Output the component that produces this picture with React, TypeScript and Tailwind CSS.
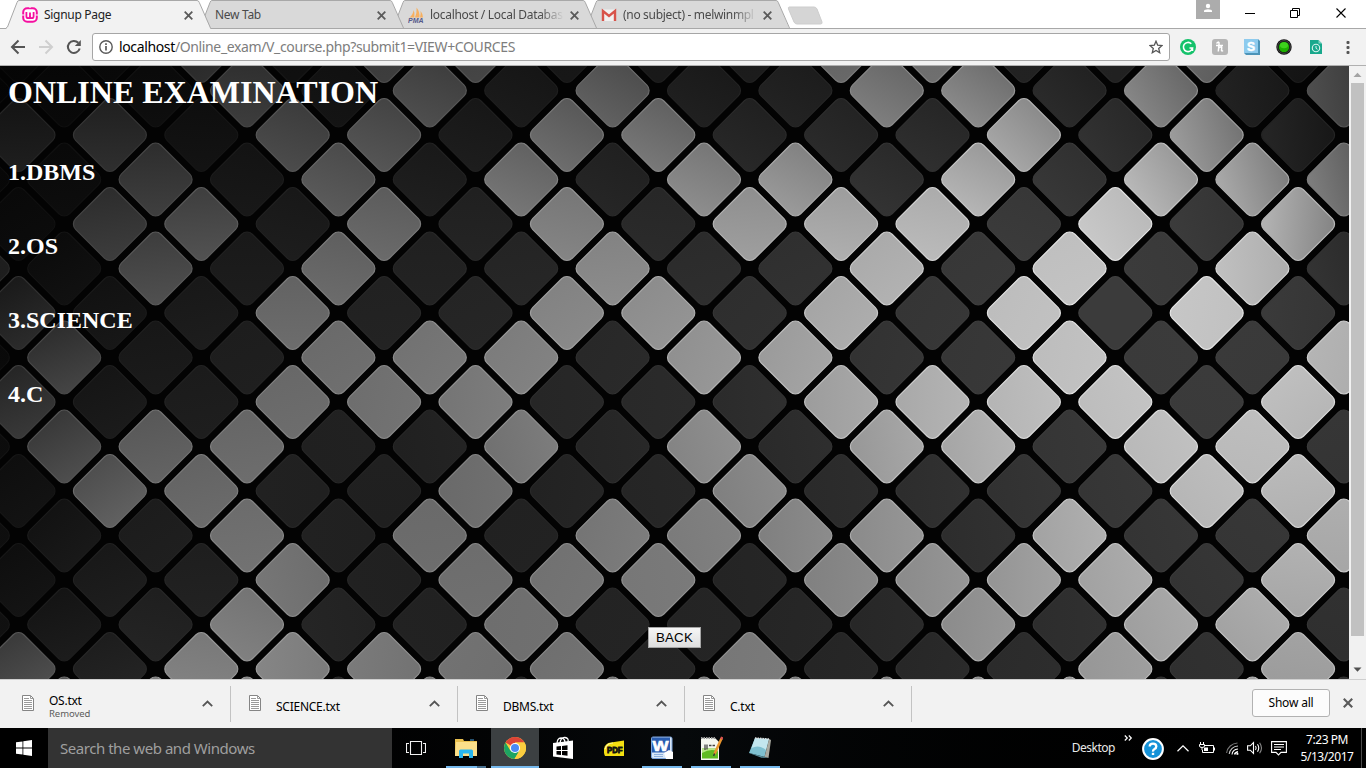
import React from "react";

/* ---------- wallpaper ---------- */

const FIELD_X = [0, 130, 260, 400, 520, 640, 760, 880, 1000, 1100, 1200, 1280, 1349];
const FIELD_Y = [0, 69, 154, 244, 334, 424, 514, 614];
const FIELD = [
  [14, 30, 50, 60, 70, 80, 90, 104, 112, 112, 100, 80, 56],
  [22, 42, 64, 78, 94, 106, 122, 132, 152, 152, 138, 110, 78],
  [30, 56, 84, 100, 120, 134, 152, 172, 188, 194, 186, 166, 124],
  [28, 72, 100, 114, 128, 142, 158, 174, 190, 196, 196, 188, 172],
  [40, 86, 104, 114, 126, 138, 152, 168, 184, 192, 194, 190, 178],
  [48, 94, 110, 104, 112, 126, 134, 150, 168, 180, 186, 184, 174],
  [50, 96, 116, 108, 112, 120, 124, 138, 152, 166, 174, 174, 166],
  [62, 122, 134, 118, 110, 118, 120, 128, 142, 152, 158, 158, 152],
];

/* Columns of the bright tiles, row by row from the top edge. */
const BRIGHT: number[][] = [
  [4, 8, 10, 18, 20, 26],
  [5, 9, 13, 19, 21, 25, 29],
  [0, 2, 6, 8, 12, 14, 22, 26],
  [3, 7, 11, 15, 17, 21, 25, 27, 29],
  [2, 4, 8, 12, 16, 18, 20, 24, 28],
  [-1, 3, 7, 13, 19, 23, 27],
  [0, 6, 12, 14, 18, 22, 26],
  [1, 7, 9, 11, 15, 17, 23, 29],
  [0, 6, 8, 10, 18, 20, 22, 24, 28],
  [1, 3, 5, 11, 15, 19, 21, 25, 27],
  [2, 4, 10, 16, 26, 28],
  [5, 9, 13, 15, 17, 19, 23, 29],
  [6, 10, 12, 14, 18, 20, 22, 24, 28],
  [5, 11, 21, 25, 27],
  [0, 4, 6, 8, 10, 12, 16, 24, 28],
  [1, 3, 5, 9, 13, 15, 17, 19, 21, 23, 27],
];

function locate(axis: number[], v: number): [number, number] {
  const c = Math.min(Math.max(v, axis[0]), axis[axis.length - 1]);
  let i = 0;
  while (i < axis.length - 2 && c > axis[i + 1]) i++;
  return [i, (c - axis[i]) / (axis[i + 1] - axis[i])];
}

function light(x: number, y: number): number {
  const [i, u] = locate(FIELD_X, x);
  const [j, v] = locate(FIELD_Y, y);
  const a = FIELD[j][i] * (1 - u) + FIELD[j][i + 1] * u;
  const b = FIELD[j + 1][i] * (1 - u) + FIELD[j + 1][i + 1] * u;
  return a * (1 - v) + b * v;
}

function gray(v: number): string {
  const g = Math.round(Math.min(255, Math.max(0, v)));
  return `rgb(${g},${g},${g})`;
}

function Wallpaper() {
  const defs: React.ReactNode[] = [];
  const tiles: React.ReactNode[] = [];
  BRIGHT.forEach((cols, row) => {
    const cy = 24.5 + (row - 1) * 44.5;
    for (let col = -1; col < 30; col++) {
      if ((col + row) % 2 !== 0) continue;
      const cx = 18.5 + col * 45.7;
      const lit = cols.includes(col);
      const k = lit ? 1 : 0.3;
      const c = light(cx, cy) * k;
      const gx = (light(cx + 30, cy) - light(cx - 30, cy)) * k;
      const gy = (light(cx, cy + 30) - light(cx, cy - 30)) * k;
      const n = Math.hypot(gx, gy) || 1;
      const id = `t${row}_${col + 1}`;
      const d = n / 2;
      defs.push(
        <linearGradient
          key={id}
          id={id}
          gradientUnits="userSpaceOnUse"
          x1={cx - (gx / n) * 32}
          y1={cy - (gy / n) * 32}
          x2={cx + (gx / n) * 32}
          y2={cy + (gy / n) * 32}
        >
          <stop offset="0" stopColor={gray(c - d)} />
          <stop offset="1" stopColor={gray(c + d)} />
        </linearGradient>
      );
      tiles.push(
        <rect
          key={id}
          x={cx - 28}
          y={cy - 28}
          width="56"
          height="56"
          rx="7.5"
          transform={`rotate(45 ${cx} ${cy})`}
          fill={`url(#${id})`}
          stroke={gray(lit ? c * 1.12 + 10 : c + 6)}
          strokeWidth="1.2"
        />
      );
    }
  });
  return (
    <svg className="absolute inset-0" width="1349" height="613" viewBox="0 0 1349 613">
      <rect width="1349" height="613" fill="#030303" />
      <defs>{defs}</defs>
      {tiles}
    </svg>
  );
}

/* ---------- browser tabs ---------- */

function Cross({ className = "", s = 9, w = 1.8 }: { className?: string; s?: number; w?: number }) {
  return (
    <svg className={className} width={s} height={s} viewBox="0 0 9 9" stroke="#5a5a5a" strokeWidth={w}>
      <path d="M.7 .7L8.3 8.3M8.3 .7L.7 8.3" />
    </svg>
  );
}

function WampIcon() {
  return (
    <svg width="16" height="16" viewBox="0 0 16 16">
      <rect x="1.2" y="1.2" width="13.6" height="13.6" rx="4" fill="#fff" stroke="#f50fa0" strokeWidth="2" />
      <path d="M0 8h2.4M13.6 8H16M8 0v1" stroke="#fff" strokeWidth="1" />
      <path d="M4.4 5v4.2q0 2 1.8 2T8 9.2V5.6M8 9.2q0 2 1.8 2t1.8-2V5" fill="none" stroke="#f50fa0" strokeWidth="1.8" />
    </svg>
  );
}

function PmaIcon() {
  return (
    <svg width="16" height="16" viewBox="0 0 16 16">
      <path d="M1.500 10.500Q5 8 5.600 3Q7 6 6.400 10.500zM7 10.500Q9 6 8.600 .5Q12 5 11.400 10.500zM12 10.500Q13 7 12.600 4Q15 7 15 10.500z" fill="#f7b060" />
      <text
        x="0"
        y="15.800"
        fontSize="6.500"
        fontWeight="700"
        fontStyle="italic"
        fill="#55588a"
        fontFamily="Liberation Sans, sans-serif"
        textLength="15.500"
        lengthAdjust="spacingAndGlyphs"
      >
        PMA
      </text>
    </svg>
  );
}

function GmailIcon() {
  return (
    <svg width="16" height="16" viewBox="0 0 16 16">
      <rect x="1" y="2.500" width="14" height="11.500" rx="1" fill="#f1f1f1" />
      <path d="M2 14V4l6 5 6-5v10" fill="none" stroke="#d8534a" strokeWidth="2.400" />
    </svg>
  );
}

function Tab({
  title,
  icon,
  active = false,
  layer,
}: {
  title: React.ReactNode;
  icon?: React.ReactNode;
  active?: boolean;
  layer: string;
}) {
  return (
    <div className={`relative -mr-3 flex h-7 w-[205px] shrink-0 items-center pl-4 pr-[18px] pt-[2px] ${layer}`}>
      <svg className="absolute left-0 top-0" width="205" height={active ? 29 : 28} viewBox={active ? "0 0 205 29" : "0 0 205 28"}>
        <path
          d="M0 29L1.500 27L11 2.500Q11.600 1 13 1H191Q192.600 1 193.300 2.500L204.500 29z"
          fill={active ? "#f2f2f2" : "#d9d9d9"}
        />
        <path d="M0 28L1.500 27L11 2.500Q11.600 .500 13 .500H191Q192.600 .500 193.300 2.500L204.500 28" fill="none" stroke="#a8a8a8" />
      </svg>
      <div className="relative flex min-w-0 flex-1 items-center gap-[6px]">
        {icon}
        <span className={`flex-1 whitespace-nowrap text-[12px] leading-4 ${active ? "text-[#222]" : "text-[#4a4a4a]"}`}>{title}</span>
      </div>
      <Cross className="relative ml-[6px]" />
    </div>
  );
}

function TabStrip() {
  const fade = "w-[134px] [mask-image:linear-gradient(to_right,black_82%,transparent)]";
  return (
    <div className="flex h-7 shrink-0 bg-white pl-[6px]">
      <Tab layer="z-40" active icon={<WampIcon />} title={<span className="tracking-[-0.3px]">Signup Page</span>} />
      <Tab layer="z-30" title={<span className="tracking-[-0.3px]">New Tab</span>} />
      <Tab
        layer="z-20"
        icon={<PmaIcon />}
        title={<div className={`-mr-2 tracking-[-0.3px] ${fade}`}>localhost / Local Databas</div>}
      />
      <Tab
        layer="z-10"
        icon={<GmailIcon />}
        title={<div className={`-mr-2 tracking-[-0.32px] ${fade}`}>(no subject) - melwinmpl</div>}
      />
      <svg className="ml-[9px] mt-[6px]" width="36" height="19" viewBox="0 0 36 19">
        <path d="M2 1h25q2 0 3 2l5 13q.5 2-1.500 2H10q-2 0-3-2L1.500 3Q1 1 2 1z" fill="#d5d5d5" stroke="#cdcdcd" />
      </svg>
      <div className="ml-auto flex">
        <div className="h-[19px] w-6 bg-[#acacac]">
          <svg width="24" height="19" viewBox="0 0 24 19" fill="#fff">
            <circle cx="12" cy="6" r="2.200" />
            <path d="M8 12V10.800Q8.500 9.300 12 9.300T16 10.800V12z" />
          </svg>
        </div>
        <svg width="146" height="28" viewBox="0 0 146 28" fill="none" stroke="#000" strokeWidth="1">
          <path d="M25 13.500h10M70.500 10.500h7v7h-7zM72.500 10v-1.500h7v7H78" />
          <path d="M116.500 8.500l9 9M125.500 8.500l-9 9" strokeWidth="1.100" />
        </svg>
      </div>
    </div>
  );
}

/* ---------- toolbar ---------- */

function Toolbar() {
  return (
    <div className="flex h-[38px] shrink-0 items-center border-b border-t border-b-[#b0b0b0] border-t-[#a8a8a8] bg-[#f2f2f2]">
      <svg width="92" height="36" viewBox="0 0 92 36" fill="none" strokeWidth="2">
        <path d="M25 18H12.500M18.500 11.500L12 18l6.500 6.500" stroke="#555" />
        <path d="M39 18h12.500M45.500 11.500L52 18l-6.500 6.500" stroke="#cfcfcf" />
        <path d="M78.300 13.800A6 6 0 1 0 79.700 19.500" stroke="#555" />
        <path d="M80.800 11v6h-6z" fill="#555" />
      </svg>
      <div className="flex h-[28px] w-[1078px] items-center rounded-[3px] border border-[#a6a6a6] bg-white">
        <svg className="ml-[6px]" width="14" height="14" viewBox="0 0 14 14">
          <circle cx="7" cy="7" r="6.200" fill="none" stroke="#5a5a5a" strokeWidth="1.400" />
          <path d="M7 6v4.500M7 3.300V5" stroke="#5a5a5a" strokeWidth="1.700" />
        </svg>
        <span className="ml-[6px] whitespace-nowrap text-[14px] leading-5 tracking-[-0.365px] text-[#7d7d7d]">
          <span className="text-black">localhost</span>/Online_exam/V_course.php?submit1=VIEW+COURCES
        </span>
        <svg className="ml-auto mr-[6px]" width="14" height="14" viewBox="0 0 14 14">
          <path
            d="M7 1.200l1.700 4 4.300.400-3.300 2.800 1 4.300L7 10.400l-3.700 2.300 1-4.300L1 5.600l4.300-.400z"
            fill="none"
            stroke="#555"
            strokeWidth="1.300"
          />
        </svg>
      </div>
      <div className="flex items-center gap-4 pl-[10px]">
        <svg width="16" height="16" viewBox="0 0 16 16">
          <circle cx="8" cy="8" r="8" fill="#15c26b" />
          <path d="M11.300 4.800A4.600 4.600 0 1 0 12.500 9H9.500M12.500 9v3" fill="none" stroke="#fff" strokeWidth="1.600" />
        </svg>
        <svg width="16" height="16" viewBox="0 0 16 16">
          <rect width="16" height="16" rx="3" fill="#b5b5b5" />
          <path d="M4.500 4.500Q7.500 1.500 7 5L6.300 12.500M4 6.500h7M6.300 9.500Q10 6.500 9.700 9L9.500 11.500q.5 1 1.500 0" fill="none" stroke="#fff" strokeWidth="1.500" />
        </svg>
        <svg width="16" height="16" viewBox="0 0 16 16">
          <path d="M0 0h14l2 2v14H2l-2-2z" fill="#4d94b8" />
          <rect width="14" height="14" fill="#8ecbee" />
          <text x="3" y="11.500" fontSize="12" fontWeight="700" fill="#fff" stroke="#fff" strokeWidth=".5" fontFamily="Liberation Sans, sans-serif">
            S
          </text>
        </svg>
        <svg width="16" height="16" viewBox="0 0 16 16">
          <circle cx="8" cy="8" r="7.700" fill="#111" />
          <circle cx="8" cy="8" r="6.400" fill="none" stroke="#555" strokeWidth=".8" />
          <circle cx="8" cy="8" r="5.200" fill="#1db000" />
          <ellipse cx="8" cy="6.300" rx="4" ry="3" fill="#3ed21d" />
        </svg>
        <svg width="16" height="16" viewBox="0 0 16 16">
          <path d="M2 1h8.500L14 4.500V15H2z" fill="#18a88c" />
          <path d="M10.500 1v3.500H14z" fill="#7dd3c2" />
          <circle cx="8" cy="9" r="3.700" fill="none" stroke="#d9f3ee" strokeWidth="1.100" />
          <path d="M8 7v2.300l1.500 1" fill="none" stroke="#d9f3ee" />
        </svg>
        <svg className="ml-[6px]" width="4" height="14" viewBox="0 0 4 14" fill="#555">
          <rect x=".5" y="1" width="3" height="3" rx="1" />
          <rect x=".5" y="6" width="3" height="3" rx="1" />
          <rect x=".5" y="11" width="3" height="3" rx="1" />
        </svg>
      </div>
    </div>
  );
}

/* ---------- page ---------- */

const COURSES = ["1.DBMS", "2.OS", "3.SCIENCE", "4.C"];

function Page() {
  return (
    <div className="flex h-[613px] shrink-0">
      <main className="relative flex w-[1349px] flex-col overflow-hidden bg-black">
        <Wallpaper />
        <div className="relative flex flex-1 flex-col px-2 pt-2 font-['Liberation_Serif',serif] font-bold text-white">
          <h1 className="h-[37px] text-[32px] leading-[37px]">ONLINE EXAMINATION</h1>
          <div className="mt-12 flex flex-col gap-[47px]">
            {COURSES.map((name) => (
              <h2 key={name} className="h-[27px] text-[24px] leading-[27px]">
                {name}
              </h2>
            ))}
          </div>
          <button className="mb-[31px] mt-auto h-[21px] w-[53px] self-center border border-[#a5a5a5] bg-gradient-to-b from-[#f6f6f6] to-[#dedede] font-['Liberation_Sans',sans-serif] text-[13.33px] font-normal leading-[18px] tracking-[0.2px] text-black">
            BACK
          </button>
        </div>
      </main>
      <div className="flex w-[17px] flex-col items-center bg-[#f1f1f1]">
        <svg width="17" height="17" viewBox="0 0 17 17">
          <path d="M4.500 11h8L8.500 6.800z" fill="#a3a3a3" />
        </svg>
        <div className="h-[553px] w-[13px] bg-[#c1c1c1]" />
        <svg className="mt-auto" width="17" height="17" viewBox="0 0 17 17">
          <path d="M4.500 5.500h8L8.500 9.700z" fill="#505050" />
        </svg>
      </div>
    </div>
  );
}

/* ---------- download shelf ---------- */

function Download({ name, note }: { name: string; note?: string }) {
  return (
    <div className="flex h-9 w-[227px] items-center border-r border-[#c3c3c3] pl-[18px] pr-[17px]">
      <svg className="mb-[3px]" width="12" height="16" viewBox="0 0 12 16">
        <path d="M.5 .5h8l3 3v12H.500z" fill="#fff" stroke="#858585" />
        <path d="M8.500 .500v3h3M2 3.500h5M2 5.500h8M2 7.500h8M2 9.500h8M2 11.500h8M2 13.500h8" fill="none" stroke="#9a9a9a" />
      </svg>
      <div className="ml-[15px] flex-1">
        <div className="mt-[5px] text-[12px] leading-[14px] tracking-[-0.25px] text-black">{name}</div>
        {note && <div className="text-[9.500px] leading-[11px] tracking-[-0.05px] text-[#5c5c5c]">{note}</div>}
      </div>
      <svg className="mb-[2px]" width="11" height="7" viewBox="0 0 11 7">
        <path d="M.8 6.200L5.500 1.500l4.700 4.700" fill="none" stroke="#555" strokeWidth="1.800" />
      </svg>
    </div>
  );
}

function Shelf() {
  return (
    <div className="flex h-[49px] shrink-0 items-center border-t border-[#cfcfcf] bg-[#f2f2f2] pl-1">
      <Download name="OS.txt" note="Removed" />
      <Download name="SCIENCE.txt" />
      <Download name="DBMS.txt" />
      <Download name="C.txt" />
      <button className="mb-[2px] ml-auto mr-[13px] h-[28px] w-[78px] rounded-[3px] border border-[#b2b2b2] bg-[#fcfcfc] text-[12px] leading-4 tracking-[-0.18px] text-black">
        Show all
      </button>
      <Cross className="mb-[2px] mr-[13px]" s={10} w={1.9} />
    </div>
  );
}

/* ---------- taskbar ---------- */

function Slot({ children, bar = "", className = "" }: { children: React.ReactNode; bar?: string; className?: string }) {
  return (
    <div className={`relative flex h-10 items-center justify-center ${className}`}>
      {children}
      {bar && <div className={`absolute inset-x-0 bottom-0 h-[2px] ${bar}`} />}
    </div>
  );
}

function Taskbar() {
  return (
    <div className="flex h-10 shrink-0 bg-gradient-to-r from-black via-[#06090b] to-black text-white">
      <Slot className="w-12">
        <svg width="16" height="16" viewBox="0 0 16 16" fill="#fff">
          <path d="M0 2.300L6.500 1.400V7.500H0zM7.300 1.300L16 0V7.500H7.300zM0 8.400H6.500V14.600L0 13.700zM7.300 8.400H16V16L7.300 14.700z" />
        </svg>
      </Slot>
      <div className="flex h-10 w-[344px] items-center bg-[#333] pl-3 text-[15px] tracking-[-0.46px] text-[#9f9f9f]">
        Search the web and Windows
      </div>
      <Slot className="w-12">
        <svg width="20" height="14" viewBox="0 0 20 14" fill="none" stroke="#f2f2f2" strokeWidth="1.100">
          <path d="M4.500 .500h11v13h-11zM3 2.500H.500v9H3M17 2.500h2.500v9H17" />
        </svg>
      </Slot>
      <Slot className="ml-[6px] w-10" bar="bg-gradient-to-r from-[#76b9ed] from-78% to-[#48708f] to-78%">
        <svg width="22" height="20" viewBox="0 0 22 20">
          <path d="M0 1h8l1 2h13v15H0z" fill="#e9c04f" />
          <path d="M1 4h21v14H0z" fill="#fbdf8a" />
          <path d="M4 20v-7q0-1.500 1.500-1.500h11q1.500 0 1.500 1.500v7h-4v-4.500H8V20z" fill="#29b6ee" />
          <path d="M15 2h4" stroke="#4ba3dc" />
        </svg>
      </Slot>
      <Slot className="ml-[5px] w-12 bg-[#3c4042]" bar="bg-[#76b9ed]">
        <svg width="22" height="22" viewBox="0 0 22 22">
          <circle cx="11" cy="11" r="11" fill="#fbcd3f" />
          <path d="M11 11L1.500 5.500A11 11 0 0 1 20.500 5.500H11z" fill="#dc4437" />
          <path d="M1.500 5.500A11 11 0 0 0 10.500 22L15.600 13.600L11 11L6.300 13.600z" fill="#1da462" />
          <path d="M15.600 13.600L10.500 22A11 11 0 0 0 20.500 5.500H11z" fill="#fbcd3f" />
          <circle cx="11" cy="11" r="5.100" fill="#fff" />
          <circle cx="11" cy="11" r="4" fill="#4a8af4" />
        </svg>
      </Slot>
      <Slot className="w-12">
        <svg width="22" height="24" viewBox="0 0 22 24">
          <path d="M5 8Q5 2 9 2t4 5M8 7Q9 1 13 1.500T16 6" fill="none" stroke="#fff" strokeWidth="1.300" />
          <path d="M1 7L21 4.500V23L1 20.500z" fill="#fff" />
          <path d="M4.500 10.500l4.500-.5v4H4.500zM10 9.900l5.500-.6V14H10zM4.500 15H9v4l-4.500-.500zM10 15h5.500v4.700L10 19.100z" fill="#000" />
        </svg>
      </Slot>
      <Slot className="w-[53px]">
        <svg width="20" height="17" viewBox="0 0 20 17">
          <path d="M0 9Q1 3 7 2.500L20 .500V16H1Q-.5 13 0 9z" fill="#f5df11" />
          <path d="M1 9Q3 3 9 3" fill="none" stroke="#fff8a0" strokeWidth="1.200" />
          <text
            x="3"
            y="13"
            fontSize="8.500"
            fontWeight="900"
            fill="#111"
            stroke="#111"
            strokeWidth=".9"
            fontFamily="Liberation Sans, sans-serif"
            textLength="15.500"
            lengthAdjust="spacingAndGlyphs"
          >
            PDF
          </text>
        </svg>
      </Slot>
      <Slot className="ml-[2px] w-10" bar="bg-[#76b9ed]">
        <svg width="22" height="24" viewBox="0 0 22 24">
          <rect x=".5" y="1" width="20.500" height="21.500" rx="1.500" fill="#d9e7f7" stroke="#7ba3da" />
          <rect x="1" y="1.500" width="18" height="15" fill="#2a5db0" />
          <text
            x="1.500"
            y="14.500"
            fontSize="15"
            fontWeight="700"
            fill="#fff"
            stroke="#fff"
            strokeWidth=".7"
            fontFamily="Liberation Sans, sans-serif"
            textLength="16"
            lengthAdjust="spacingAndGlyphs"
          >
            W
          </text>
          <path d="M13 17l5-3 4 2v7h-7z" fill="#fff" />
          <path d="M3 18.500h9M3 20.500h9" stroke="#8fb0dd" />
        </svg>
      </Slot>
      <Slot className="ml-[9px] w-10" bar="bg-[#76b9ed]">
        <svg width="24" height="25" viewBox="0 0 24 25">
          <path d="M2 2h14l4 4v18H2z" fill="#f4f6ee" />
          <path d="M3 12.500h16V22.500H3z" fill="#5fbb22" />
          <path d="M3 12.500h16v3Q12 12 3 17z" fill="#b9e886" />
          <path d="M6 14V8.500M8 8.500v5M10 9.500h2.500M13.500 9.500H16" stroke="#444" strokeWidth="1.300" />
          <path d="M2 2h14" stroke="#9a9a9a" strokeDasharray="1.500 1" strokeWidth="2" />
          <path d="M22.500 2.500L15.500 18" stroke="#e9952d" strokeWidth="2.600" />
          <path d="M23.200 1l-1 2.200" stroke="#d9534f" strokeWidth="2.600" />
          <path d="M15.600 17.500l-1 2.500" stroke="#333" strokeWidth="1.400" />
        </svg>
      </Slot>
      <Slot className="ml-[9px] w-10" bar="bg-[#76b9ed]">
        <svg width="24" height="24" viewBox="0 0 24 24">
          <path d="M7 2l14 1L16.500 21 1 17z" fill="#7fc0d0" />
          <path d="M7 2l14 1-3 11Q11 8 3.500 12z" fill="#c3e6ee" />
          <path d="M21 3l2 1-2.500 18-4-1z" fill="#a9a9a0" />
          <path d="M1 17l15.500 4 4 1-7-.3z" fill="#5a8f9d" />
          <path d="M7 2l14 1" stroke="#ddd" strokeWidth="1.500" strokeDasharray="1.500 1" />
        </svg>
      </Slot>
      <div className="ml-auto flex items-center">
        <span className="text-[12px] tracking-[-0.5px] text-[#e8e8e8]">Desktop</span>
        <svg className="mb-[20px] ml-[9px]" width="9" height="6" viewBox="0 0 9 6" fill="none" stroke="#fff" strokeWidth="1.200">
          <path d="M.8 .5L3.300 3 .8 5.500M4.800 .5L7.300 3 4.800 5.500" />
        </svg>
        <svg className="ml-[9px] mt-[2px]" width="22" height="22" viewBox="0 0 22 22">
          <circle cx="11" cy="11" r="9.900" fill="#1592d8" stroke="#fff" strokeWidth="2" />
          <path d="M7.700 8.600Q7.700 5.600 11 5.600T14.300 8.400Q14.300 10 12.500 11T11 13.600" fill="none" stroke="#fff" strokeWidth="2.300" />
          <rect x="9.800" y="14.800" width="2.400" height="2.200" fill="#fff" />
        </svg>
        <svg className="ml-[13px]" width="12" height="7" viewBox="0 0 12 7" fill="none" stroke="#fff" strokeWidth="1.200">
          <path d="M.5 6.200L6 .8l5.500 5.400" />
        </svg>
        <svg className="ml-[10px]" width="16" height="13" viewBox="0 0 16 13" fill="none" stroke="#fff">
          <path d="M5.500 3.500h9v7H3.500V8M15.500 5.500v3" />
          <path d="M1.500 0v2.500M4.500 0v2.500M.500 2.500h5v1.500q0 1.500-2.500 1.500T.500 4zM3 5.500V8" />
          <path d="M5 5.500h4v3.500H5z" fill="#fff" stroke="none" />
        </svg>
        <svg className="ml-[11px]" width="13" height="13" viewBox="0 0 13 13" fill="none" stroke="#fff" strokeWidth="1.100">
          <path d="M.6 11A11.500 11.500 0 0 1 11.500 1" stroke="#777" />
          <path d="M3.200 12A9 9 0 0 1 12 4" stroke="#ccc" />
          <path d="M6 12.500Q6.500 7.500 12 7" />
          <path d="M8.600 12.500Q9 10.500 12 9.800" strokeWidth="1.400" />
          <rect x="10.500" y="11" width="1.800" height="1.800" fill="#fff" stroke="none" />
        </svg>
        <svg className="ml-[8px]" width="16" height="14" viewBox="0 0 16 14" fill="none" stroke="#fff" strokeWidth="1.100">
          <path d="M.600 4.800h2.700L6.500 1.500v11L3.300 9.200H.600z" />
          <path d="M8.500 5q1.300 2 0 4M10.500 3.300q2.500 3.700 0 7.400" />
          <path d="M12.600 1.700q3.800 5.300 0 10.600" stroke="#888" />
        </svg>
        <svg className="ml-[8px]" width="16" height="16" viewBox="0 0 16 16" fill="none" stroke="#fff" strokeWidth="1.100">
          <path d="M.600 1.600h14.800v10.800H10L7.500 15 5 12.400H.600zM3 4.500h10M3 7h10M3 9.500h7" />
        </svg>
        <div className="mb-px ml-[13px] mr-[7px] w-[54px] whitespace-nowrap text-center text-[12px] leading-[17px] tracking-[-0.45px]">
          <div>7:23 PM</div>
          <div>5/13/2017</div>
        </div>
        <div className="mr-1 h-10 w-px bg-[#4a4a4a]" />
      </div>
    </div>
  );
}

export default function App() {
  return (
    <div className="flex h-[768px] w-[1366px] flex-col overflow-hidden bg-white font-['Noto_Sans','Open_Sans',sans-serif]">
      <TabStrip />
      <Toolbar />
      <Page />
      <Shelf />
      <Taskbar />
    </div>
  );
}
